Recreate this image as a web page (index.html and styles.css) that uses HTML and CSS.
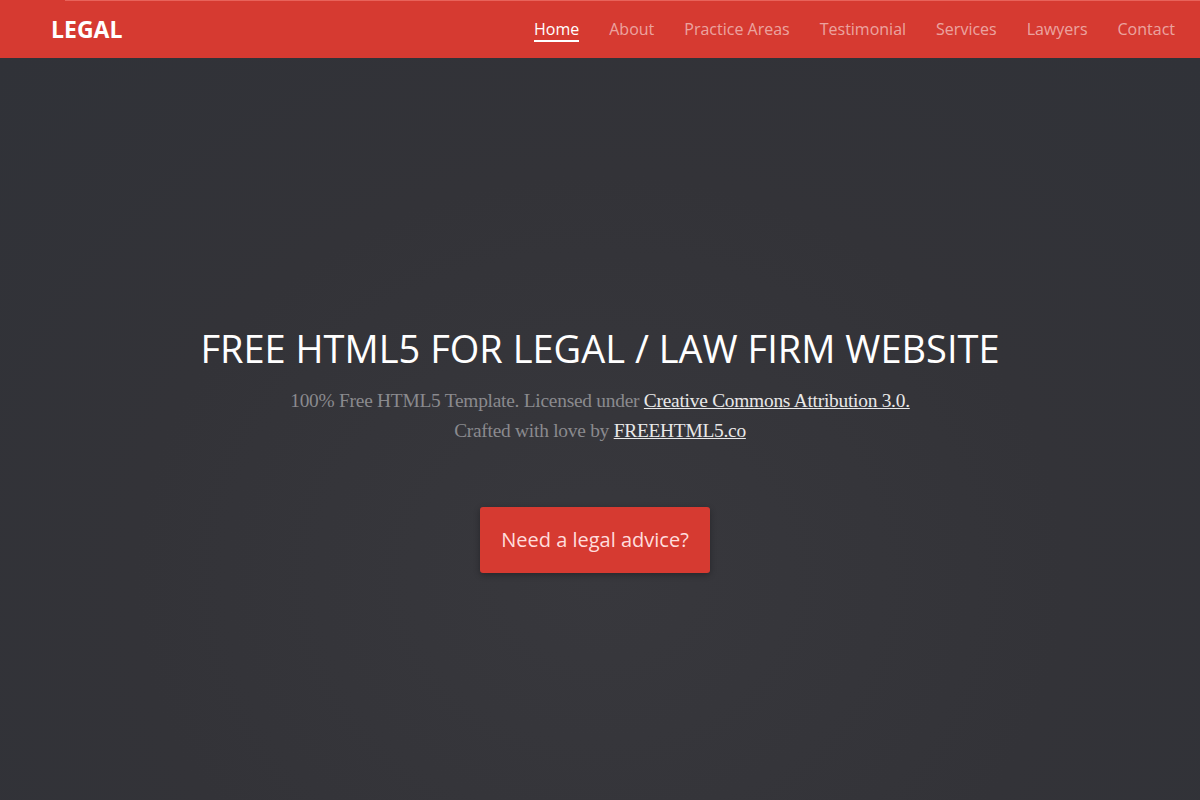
FILE: index.html
```html
<!DOCTYPE html>
<html lang="en">
<head>
    <meta charset="UTF-8">
    <meta name="viewport" content="width=device-width, initial-scale=1.0">
    <title>Legal</title>
    <link rel="stylesheet" href="styles.css">
</head>
<body>
    <div class="loader-line"></div>
    <header class="navbar">
        <a class="logo" href="#">LEGAL</a>
        <nav class="menu">
            <a class="active" href="#">Home</a>
            <a href="#">About</a>
            <a href="#">Practice Areas</a>
            <a href="#">Testimonial</a>
            <a href="#">Services</a>
            <a href="#">Lawyers</a>
            <a href="#">Contact</a>
        </nav>
    </header>
    <section class="hero">
        <div class="hero-text">
            <h1>FREE HTML5 FOR LEGAL / LAW FIRM WEBSITE</h1>
            <p>100% Free HTML5 Template. Licensed under <a href="#">Creative Commons Attribution 3.0.</a><br>
            Crafted with love by <a href="#">FREEHTML5.co</a></p>
            <a class="btn" href="#">Need a legal advice?</a>
        </div>
    </section>
</body>
</html>
```

FILE: styles.css
```css
body {
    margin: 0;
    padding: 0;
    font-family: "Open Sans", sans-serif;
    background-color: #333338;
    height: 800px;
    overflow: hidden;
}
.loader-line {
    position: absolute;
    top: 0;
    left: 65px;
    right: 0;
    height: 1px;
    background: #e8625a;
    z-index: 2;
}
.navbar {
    background-color: #d63a31;
    height: 58px;
    display: flex;
    align-items: center;
    justify-content: space-between;
    padding: 0 25px 0 51px;
}
.logo {
    color: white;
    font-weight: 700;
    font-size: 23px;
    text-decoration: none;
    margin-top: -1px;
}
.menu {
    display: flex;
    gap: 30px;
    margin-top: 2px;
}
.menu a {
    color: rgba(255, 255, 255, 0.55);
    text-decoration: none;
    font-size: 16px;
    line-height: 22px;
}
.menu a.active {
    color: white;
    border-bottom: 2px solid white;
}
.hero {
    height: 742px;
    background: radial-gradient(ellipse at 50% 70%, #38383d 0%, #333338 55%, #303238 100%);
    display: flex;
    justify-content: center;
}
.hero-text {
    text-align: center;
    padding-top: 268px;
}
.hero-text h1 {
    color: white;
    font-weight: 400;
    font-size: 38px;
    margin: 0 0 14px;
    line-height: 1.2;
}
.hero-text p {
    font-family: "Liberation Serif", serif;
    color: #8a8a8e;
    font-size: 19.4px;
    line-height: 30px;
    margin: 0 0 61px;
    letter-spacing: -0.25px;
}
.hero-text p a {
    color: #e8e8e8;
}
.btn {
    display: inline-block;
    background: #d63a31;
    color: #fdd;
    text-decoration: none;
    font-size: 20px;
    padding: 19px 21px 20px;
    margin-right: 10px;
    border-radius: 3px;
    box-shadow: 0 2px 6px rgba(0, 0, 0, 0.3);
}
```
